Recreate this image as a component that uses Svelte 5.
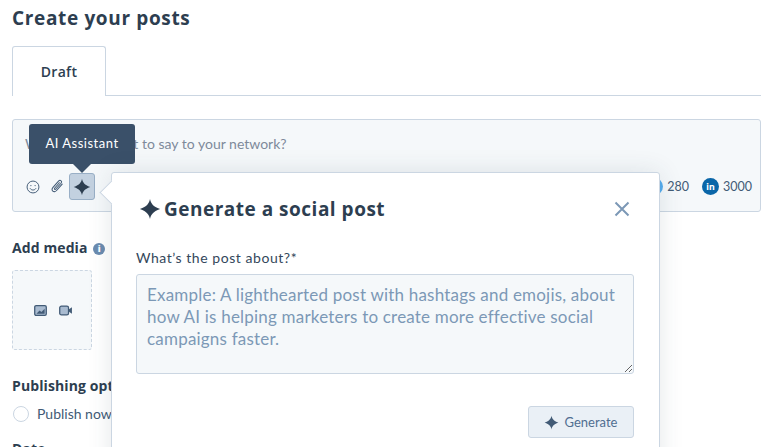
<script>
  const sparkle = 'M12 1c.9 4.600 3.200 8.200 11 11-7.800 2.800-10.100 6.400-11 11-.9-4.600-3.200-8.200-11-11 7.800-2.800 10.100-6.400 11-11z';
  let about = '';
</script>

<main class="page">
  <h1>Create your posts</h1>

  <div class="tabs">
    <div class="tab">Draft</div>
  </div>

  <section class="composer">
    <p class="prompt">What do you want to say to your network?</p>
    <div class="toolbar">
      <div class="tools">
        <svg class="tool" viewBox="0 0 16 16" width="14" height="14" fill="none" stroke="#425b76" stroke-width="1.100">
          <circle cx="8" cy="8" r="6.800" />
          <circle cx="5.600" cy="6.300" r=".7" fill="#425b76" stroke="none" />
          <circle cx="10.400" cy="6.300" r=".7" fill="#425b76" stroke="none" />
          <path d="M4.600 9.500c1.600 2.600 5.200 2.600 6.800 0" />
        </svg>
        <svg class="tool" viewBox="0 0 16 16" width="15" height="15" fill="none" stroke="#425b76" stroke-width="1.100" stroke-linecap="round">
          <path d="M13 5.500 7 12.300c-1.200 1.400-3 1.500-4 .6-1-.9-.9-2.600.2-3.900l5.900-6.700c.8-.9 2-1 2.700-.4.700.6.600 1.700-.1 2.600L6.300 10.700c-.4.500-1 .5-1.300.3-.4-.3-.3-.9.100-1.400L10 4" />
        </svg>
        <button class="ai-btn" aria-label="AI Assistant">
          <svg viewBox="0 0 24 24" width="18" height="18"><path d={sparkle} fill="#2d3e50" /></svg>
        </button>
      </div>
      <div class="counts">
        <span class="count"><span class="twitter"></span>280</span>
        <span class="count"><span class="linkedin">in</span>3000</span>
      </div>
    </div>
    <div class="tooltip">AI Assistant</div>
  </section>

  <section class="media">
    <h2>Add media <span class="info">i</span></h2>
    <div class="dropzone">
      <svg viewBox="0 0 14 12" width="13" height="11">
        <rect x=".7" y=".7" width="12.600" height="10.600" rx="1.500" fill="#a9bbd0" stroke="#425b76" stroke-width="1.400" />
        <path d="M2.500 9.500 6 6l2 1.500L11.500 4v5.500z" fill="#425b76" />
      </svg>
      <svg viewBox="0 0 14 12" width="13" height="11">
        <rect x=".7" y="1.200" width="9.600" height="9.600" rx="1.800" fill="#a9bbd0" stroke="#425b76" stroke-width="1.400" />
        <path d="M10.500 5 14 2.500v7L10.500 7z" fill="#425b76" />
      </svg>
    </div>
  </section>

  <section class="publishing">
    <h2>Publishing options</h2>
    <label class="radio"><span class="dot"></span>Publish now</label>
    <h2 class="date">Date</h2>
  </section>

  <aside class="popover">
    <header>
      <h3>
        <svg viewBox="0 0 24 24" width="22" height="22"><path d={sparkle} fill="#2d3e50" /></svg>
        Generate a social post
      </h3>
      <svg class="close" viewBox="0 0 16 16" width="16" height="16" fill="none" stroke="#7c98b6" stroke-width="2">
        <path d="M1.500 1.500l13 13M14.500 1.500l-13 13" />
      </svg>
    </header>
    <label class="field">
      <span>What’s the post about?*</span>
      <textarea
        bind:value={about}
        placeholder="Example: A lighthearted post with hashtags and emojis, about how AI is helping marketers to create more effective social campaigns faster."
      ></textarea>
    </label>
    <div class="actions">
      <button class="generate">
        <svg viewBox="0 0 24 24" width="15" height="15"><path d={sparkle} fill="#425b76" /></svg>
        Generate
      </button>
    </div>
  </aside>
</main>

<style>
  :global(body) {
    margin: 0;
    background: #fff;
    font-family: "Lato", "Noto Sans", sans-serif;
    color: #33475b;
    overflow: hidden;
  }

  .page {
    position: relative;
    height: 447px;
    overflow: hidden;
    padding: 6px 9px 0 12px;
    box-sizing: border-box;
  }

  h1 {
    margin: 0;
    font-family: "Open Sans", sans-serif;
    font-size: 19px;
    line-height: 24px;
    font-weight: 700;
    letter-spacing: .65px;
    color: #2d3e50;
  }

  .tabs {
    margin-top: 16px;
    height: 49px;
    border-bottom: 1px solid #cbd6e2;
    box-sizing: content-box;
  }

  .tab {
    width: 94px;
    height: 50px;
    box-sizing: border-box;
    border: 1px solid #cbd6e2;
    border-bottom: 0;
    border-radius: 3px 3px 0 0;
    background: #fff;
    text-align: center;
    line-height: 49px;
    font-family: "Open Sans", sans-serif;
    font-size: 14px;
    font-weight: 600;
    letter-spacing: .3px;
    color: #2d3e50;
  }

  .composer {
    position: relative;
    margin-top: 23px;
    height: 93px;
    box-sizing: border-box;
    border: 1px solid #cbd6e2;
    border-radius: 3px;
    background: #f5f8fa;
    padding: 15px 8px 0 12px;
  }

  .prompt {
    margin: 0;
    font-size: 14px;
    line-height: 18px;
    color: #7e8a9a;
  }

  .toolbar {
    display: flex;
    justify-content: space-between;
    align-items: center;
    margin-top: 20px;
  }

  .tools {
    display: flex;
    align-items: center;
    gap: 10px;
    margin-left: 1px;
  }

  .ai-btn {
    width: 26px;
    height: 27px;
    padding: 0;
    margin-left: -6px;
    display: flex;
    align-items: center;
    justify-content: center;
    background: #c3d1e0;
    border: 1px solid #99afc6;
    border-radius: 3px;
  }

  .counts {
    display: flex;
    align-items: center;
    gap: 13px;
    font-size: 12.500px;
    color: #425b76;
  }

  .count {
    display: flex;
    align-items: center;
    gap: 4px;
  }

  .twitter {
    width: 17px;
    height: 17px;
    border-radius: 50%;
    background: #55acee;
  }

  .linkedin {
    width: 17px;
    height: 17px;
    border-radius: 50%;
    background: #0a66a8;
    color: #fff;
    font-size: 10px;
    font-weight: 900;
    line-height: 16px;
    text-align: center;
  }

  .tooltip {
    position: absolute;
    left: 16px;
    top: 4px;
    width: 106px;
    height: 40px;
    box-sizing: border-box;
    background: #3a5069;
    color: #fff;
    border-radius: 3px;
    font-size: 13px;
    line-height: 38px;
    text-align: center;
    letter-spacing: .5px;
  }

  .tooltip::after {
    content: "";
    position: absolute;
    left: 44px;
    top: 40px;
    border: 9px solid transparent;
    border-top-color: #3a5069;
    border-bottom: 0;
  }

  h2 {
    margin: 0;
    font-family: "Open Sans", sans-serif;
    font-size: 14px;
    line-height: 18px;
    font-weight: 700;
    letter-spacing: .1px;
    color: #2d3e50;
  }

  .media {
    margin-top: 27px;
  }

  .info {
    display: inline-block;
    width: 12px;
    height: 12px;
    margin-left: 2px;
    border-radius: 50%;
    background: #6a8bb0;
    color: #fff;
    font-size: 9px;
    font-weight: 900;
    line-height: 12px;
    text-align: center;
    vertical-align: 1px;
  }

  .dropzone {
    margin-top: 13px;
    width: 80px;
    height: 80px;
    box-sizing: border-box;
    display: flex;
    align-items: center;
    justify-content: center;
    gap: 12px;
    padding-left: 1px;
    border: 1px dashed #cbd6e2;
    border-radius: 3px;
    background: #f5f8fa;
  }

  .publishing {
    margin-top: 27px;
  }

  .radio {
    display: flex;
    align-items: center;
    gap: 8px;
    margin-top: 10px;
    margin-left: 1px;
    font-size: 14px;
    line-height: 18px;
    color: #425b76;
  }

  .dot {
    width: 14px;
    height: 14px;
    border: 1px solid #cbd6e2;
    border-radius: 50%;
    background: #fff;
  }

  .date {
    margin-top: 17px;
  }

  .popover {
    position: absolute;
    left: 111px;
    top: 172px;
    width: 549px;
    height: 330px;
    box-sizing: border-box;
    padding: 23px 25px 0 24px;
    background: #fff;
    border: 1px solid #cbd6e2;
    border-radius: 3px;
    box-shadow: 0 0 24px rgba(45, 62, 80, .12);
  }

  .popover::before {
    content: "";
    position: absolute;
    left: -9px;
    top: 11px;
    width: 16px;
    height: 16px;
    background: #fff;
    border-left: 1px solid #cbd6e2;
    border-bottom: 1px solid #cbd6e2;
    transform: rotate(45deg);
  }

  header {
    position: relative;
    display: flex;
    align-items: center;
    justify-content: space-between;
    height: 26px;
  }

  h3 {
    margin: 0;
    display: flex;
    align-items: center;
    gap: 3px;
    margin-left: 3px;
    font-family: "Open Sans", sans-serif;
    font-size: 19px;
    font-weight: 700;
    letter-spacing: .5px;
    color: #2d3e50;
  }

  .close {
    margin-right: 4px;
  }

  .field {
    display: block;
    margin-top: 27px;
    font-size: 14px;
    line-height: 18px;
    color: #33475b;
  }

  .field span {
    display: block;
    margin-bottom: 7px;
    letter-spacing: .55px;
  }

  textarea {
    display: block;
    width: 498px;
    height: 100px;
    box-sizing: border-box;
    padding: 9px 10px;
    border: 1px solid #cbd6e2;
    border-radius: 3px;
    background: #f5f8fa;
    color: #33475b;
    font-family: inherit;
    font-size: 17px;
    letter-spacing: .2px;
    line-height: 22px;
    resize: vertical;
    outline: none;
  }

  textarea::placeholder {
    color: #7c98b6;
    opacity: 1;
  }

  .actions {
    display: flex;
    justify-content: flex-end;
    width: 498px;
    margin-top: 32px;
  }

  .generate {
    width: 106px;
    height: 32px;
    display: flex;
    align-items: center;
    justify-content: center;
    gap: 6px;
    padding: 0 1px 0 0;
    background: #eaf0f6;
    border: 1px solid #cbd6e2;
    border-radius: 3px;
    color: #506e91;
    font-family: inherit;
    font-size: 13px;
  }
</style>
